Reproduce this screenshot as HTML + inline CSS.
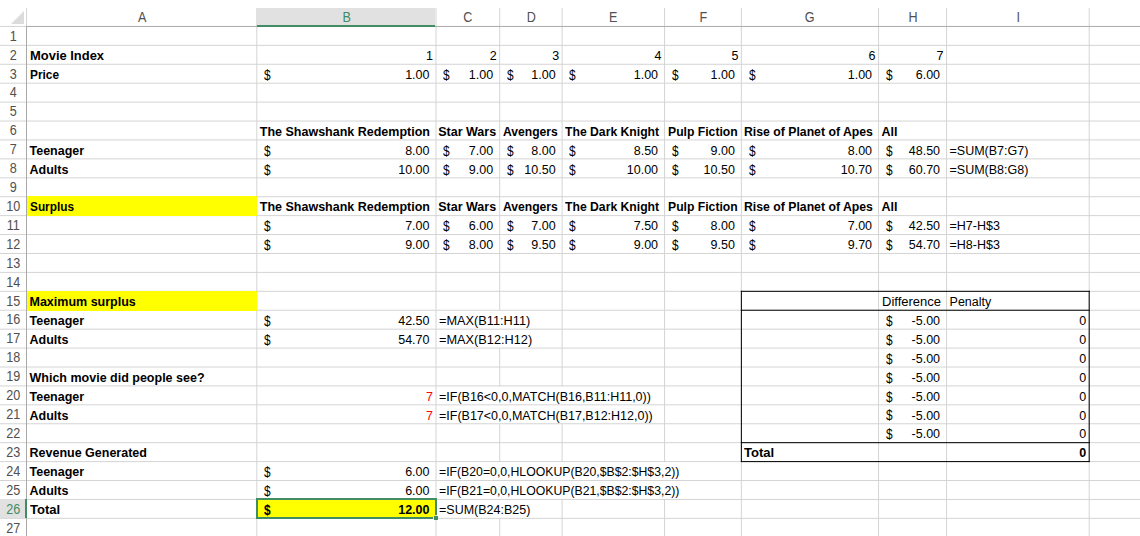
<!DOCTYPE html>
<html><head><meta charset="utf-8"><style>
html,body{margin:0;padding:0;}
body{width:1140px;height:536px;position:relative;overflow:hidden;background:#fff;font-family:"Liberation Sans",sans-serif;font-size:12.5px;color:#000;}
.t{position:absolute;white-space:nowrap;line-height:20px;height:20px;}
.f{position:absolute;}
.ch{position:absolute;top:7.15px;text-align:center;line-height:20px;height:20px;font-size:14px;transform:scaleX(0.9);}
.rh{position:absolute;left:0;width:26.50px;text-align:center;line-height:20px;height:20px;font-size:14px;transform:scaleX(0.9);}
svg{position:absolute;left:0;top:0;}
#tri{position:absolute;left:11px;top:11px;width:0;height:0;border-left:13px solid transparent;border-bottom:13px solid #dcdcdc;}
</style></head><body>
<div id="tri"></div>
<svg width="1140" height="536" viewBox="0 0 1140 536">
<line x1="0.00" y1="45.36" x2="1140.00" y2="45.36" stroke="#d4d4d4" stroke-width="1.0"/>
<line x1="0.00" y1="64.28" x2="1140.00" y2="64.28" stroke="#d4d4d4" stroke-width="1.0"/>
<line x1="0.00" y1="83.20" x2="1140.00" y2="83.20" stroke="#d4d4d4" stroke-width="1.0"/>
<line x1="0.00" y1="102.12" x2="1140.00" y2="102.12" stroke="#d4d4d4" stroke-width="1.0"/>
<line x1="0.00" y1="121.04" x2="1140.00" y2="121.04" stroke="#d4d4d4" stroke-width="1.0"/>
<line x1="0.00" y1="139.96" x2="1140.00" y2="139.96" stroke="#d4d4d4" stroke-width="1.0"/>
<line x1="0.00" y1="158.88" x2="1140.00" y2="158.88" stroke="#d4d4d4" stroke-width="1.0"/>
<line x1="0.00" y1="177.80" x2="1140.00" y2="177.80" stroke="#d4d4d4" stroke-width="1.0"/>
<line x1="0.00" y1="196.72" x2="1140.00" y2="196.72" stroke="#d4d4d4" stroke-width="1.0"/>
<line x1="0.00" y1="215.64" x2="1140.00" y2="215.64" stroke="#d4d4d4" stroke-width="1.0"/>
<line x1="0.00" y1="234.56" x2="1140.00" y2="234.56" stroke="#d4d4d4" stroke-width="1.0"/>
<line x1="0.00" y1="253.48" x2="1140.00" y2="253.48" stroke="#d4d4d4" stroke-width="1.0"/>
<line x1="0.00" y1="272.40" x2="1140.00" y2="272.40" stroke="#d4d4d4" stroke-width="1.0"/>
<line x1="0.00" y1="291.32" x2="1140.00" y2="291.32" stroke="#d4d4d4" stroke-width="1.0"/>
<line x1="0.00" y1="310.24" x2="1140.00" y2="310.24" stroke="#d4d4d4" stroke-width="1.0"/>
<line x1="0.00" y1="329.16" x2="1140.00" y2="329.16" stroke="#d4d4d4" stroke-width="1.0"/>
<line x1="0.00" y1="348.08" x2="1140.00" y2="348.08" stroke="#d4d4d4" stroke-width="1.0"/>
<line x1="0.00" y1="367.00" x2="1140.00" y2="367.00" stroke="#d4d4d4" stroke-width="1.0"/>
<line x1="0.00" y1="385.92" x2="1140.00" y2="385.92" stroke="#d4d4d4" stroke-width="1.0"/>
<line x1="0.00" y1="404.84" x2="1140.00" y2="404.84" stroke="#d4d4d4" stroke-width="1.0"/>
<line x1="0.00" y1="423.76" x2="1140.00" y2="423.76" stroke="#d4d4d4" stroke-width="1.0"/>
<line x1="0.00" y1="442.68" x2="1140.00" y2="442.68" stroke="#d4d4d4" stroke-width="1.0"/>
<line x1="0.00" y1="461.60" x2="1140.00" y2="461.60" stroke="#d4d4d4" stroke-width="1.0"/>
<line x1="0.00" y1="480.52" x2="1140.00" y2="480.52" stroke="#d4d4d4" stroke-width="1.0"/>
<line x1="0.00" y1="499.44" x2="1140.00" y2="499.44" stroke="#d4d4d4" stroke-width="1.0"/>
<line x1="0.00" y1="518.36" x2="1140.00" y2="518.36" stroke="#d4d4d4" stroke-width="1.0"/>
<line x1="0.00" y1="537.28" x2="1140.00" y2="537.28" stroke="#d4d4d4" stroke-width="1.0"/>
<line x1="256.80" y1="26.44" x2="256.80" y2="536.00" stroke="#d4d4d4" stroke-width="1.0"/>
<line x1="256.80" y1="8.00" x2="256.80" y2="26.44" stroke="#d4d4d4" stroke-width="1.0"/>
<line x1="436.00" y1="26.44" x2="436.00" y2="536.00" stroke="#d4d4d4" stroke-width="1.0"/>
<line x1="436.00" y1="8.00" x2="436.00" y2="26.44" stroke="#d4d4d4" stroke-width="1.0"/>
<line x1="499.70" y1="26.44" x2="499.70" y2="310.74" stroke="#d4d4d4" stroke-width="1.0"/>
<line x1="499.70" y1="348.58" x2="499.70" y2="386.42" stroke="#d4d4d4" stroke-width="1.0"/>
<line x1="499.70" y1="424.26" x2="499.70" y2="462.10" stroke="#d4d4d4" stroke-width="1.0"/>
<line x1="499.70" y1="518.86" x2="499.70" y2="536.00" stroke="#d4d4d4" stroke-width="1.0"/>
<line x1="499.70" y1="8.00" x2="499.70" y2="26.44" stroke="#d4d4d4" stroke-width="1.0"/>
<line x1="562.10" y1="26.44" x2="562.10" y2="386.42" stroke="#d4d4d4" stroke-width="1.0"/>
<line x1="562.10" y1="424.26" x2="562.10" y2="462.10" stroke="#d4d4d4" stroke-width="1.0"/>
<line x1="562.10" y1="499.94" x2="562.10" y2="536.00" stroke="#d4d4d4" stroke-width="1.0"/>
<line x1="562.10" y1="8.00" x2="562.10" y2="26.44" stroke="#d4d4d4" stroke-width="1.0"/>
<line x1="664.55" y1="26.44" x2="664.55" y2="462.10" stroke="#d4d4d4" stroke-width="1.0"/>
<line x1="664.55" y1="499.94" x2="664.55" y2="536.00" stroke="#d4d4d4" stroke-width="1.0"/>
<line x1="664.55" y1="8.00" x2="664.55" y2="26.44" stroke="#d4d4d4" stroke-width="1.0"/>
<line x1="741.36" y1="26.44" x2="741.36" y2="536.00" stroke="#d4d4d4" stroke-width="1.0"/>
<line x1="741.36" y1="8.00" x2="741.36" y2="26.44" stroke="#d4d4d4" stroke-width="1.0"/>
<line x1="878.55" y1="26.44" x2="878.55" y2="536.00" stroke="#d4d4d4" stroke-width="1.0"/>
<line x1="878.55" y1="8.00" x2="878.55" y2="26.44" stroke="#d4d4d4" stroke-width="1.0"/>
<line x1="946.55" y1="26.44" x2="946.55" y2="536.00" stroke="#d4d4d4" stroke-width="1.0"/>
<line x1="946.55" y1="8.00" x2="946.55" y2="26.44" stroke="#d4d4d4" stroke-width="1.0"/>
<line x1="1089.20" y1="26.44" x2="1089.20" y2="536.00" stroke="#d4d4d4" stroke-width="1.0"/>
<line x1="1089.20" y1="8.00" x2="1089.20" y2="26.44" stroke="#d4d4d4" stroke-width="1.0"/>
<line x1="0.00" y1="26.44" x2="26.00" y2="26.44" stroke="#d4d4d4" stroke-width="1"/>
<line x1="26.00" y1="26.44" x2="1140.00" y2="26.44" stroke="#a9a9a9" stroke-width="1"/>
<line x1="26.50" y1="8.00" x2="26.50" y2="25.94" stroke="#d4d4d4" stroke-width="1"/>
<line x1="26.50" y1="25.94" x2="26.50" y2="536.00" stroke="#a9a9a9" stroke-width="1"/>
<line x1="740.86" y1="291.32" x2="1089.70" y2="291.32" stroke="#000" stroke-width="1"/>
<line x1="740.86" y1="310.24" x2="1089.70" y2="310.24" stroke="#000" stroke-width="1"/>
<line x1="740.86" y1="442.68" x2="1089.70" y2="442.68" stroke="#000" stroke-width="1"/>
<line x1="740.86" y1="461.60" x2="1089.70" y2="461.60" stroke="#000" stroke-width="1"/>
<line x1="741.36" y1="290.82" x2="741.36" y2="462.10" stroke="#000" stroke-width="1"/>
<line x1="1089.20" y1="290.82" x2="1089.20" y2="462.10" stroke="#000" stroke-width="1"/>
</svg>
<div class="f" style="left:27.00px;top:196.32px;width:230.30px;height:19.62px;background:#ffff00"></div>
<div class="f" style="left:27.00px;top:290.92px;width:230.30px;height:19.62px;background:#ffff00"></div>
<div class="f" style="left:257.30px;top:499.04px;width:179.20px;height:19.62px;background:#ffff00"></div>
<div class="f" style="left:257.30px;top:8.00px;width:178.20px;height:17.44px;background:#e1e1e1"></div>
<div class="f" style="left:257.30px;top:24.94px;width:178.20px;height:2.00px;background:#428c64"></div>
<div class="f" style="left:0.00px;top:499.24px;width:25.50px;height:19.02px;background:#e1e1e1"></div>
<div class="f" style="left:25.00px;top:499.24px;width:2.00px;height:19.02px;background:#428c64"></div>
<div class="ch" style="left:26.50px;width:230.30px;color:#505050">A</div>
<div class="ch" style="left:256.80px;width:179.20px;color:#428c64">B</div>
<div class="ch" style="left:436.00px;width:63.70px;color:#505050">C</div>
<div class="ch" style="left:499.70px;width:62.40px;color:#505050">D</div>
<div class="ch" style="left:562.10px;width:102.45px;color:#505050">E</div>
<div class="ch" style="left:664.55px;width:76.81px;color:#505050">F</div>
<div class="ch" style="left:741.36px;width:137.19px;color:#505050">G</div>
<div class="ch" style="left:878.55px;width:68.00px;color:#505050">H</div>
<div class="ch" style="left:946.55px;width:142.65px;color:#505050">I</div>
<div class="rh" style="top:25.69px;color:#505050">1</div>
<div class="rh" style="top:44.61px;color:#505050">2</div>
<div class="rh" style="top:63.53px;color:#505050">3</div>
<div class="rh" style="top:82.45px;color:#505050">4</div>
<div class="rh" style="top:101.37px;color:#505050">5</div>
<div class="rh" style="top:120.29px;color:#505050">6</div>
<div class="rh" style="top:139.21px;color:#505050">7</div>
<div class="rh" style="top:158.13px;color:#505050">8</div>
<div class="rh" style="top:177.05px;color:#505050">9</div>
<div class="rh" style="top:195.97px;color:#505050">10</div>
<div class="rh" style="top:214.89px;color:#505050">11</div>
<div class="rh" style="top:233.81px;color:#505050">12</div>
<div class="rh" style="top:252.73px;color:#505050">13</div>
<div class="rh" style="top:271.65px;color:#505050">14</div>
<div class="rh" style="top:290.57px;color:#505050">15</div>
<div class="rh" style="top:309.49px;color:#505050">16</div>
<div class="rh" style="top:328.41px;color:#505050">17</div>
<div class="rh" style="top:347.33px;color:#505050">18</div>
<div class="rh" style="top:366.25px;color:#505050">19</div>
<div class="rh" style="top:385.17px;color:#505050">20</div>
<div class="rh" style="top:404.09px;color:#505050">21</div>
<div class="rh" style="top:423.01px;color:#505050">22</div>
<div class="rh" style="top:441.93px;color:#505050">23</div>
<div class="rh" style="top:460.85px;color:#505050">24</div>
<div class="rh" style="top:479.77px;color:#505050">25</div>
<div class="rh" style="top:498.69px;color:#428c64">26</div>
<div class="rh" style="top:517.61px;color:#505050">27</div>
<div class="t" style="top:46.03px;left:29.50px;font-weight:bold;transform:scaleX(1.035);transform-origin:left center;">Movie Index</div>
<div class="t" style="top:46.03px;right:707.00px;">1</div>
<div class="t" style="top:46.03px;right:643.30px;">2</div>
<div class="t" style="top:46.03px;right:580.90px;">3</div>
<div class="t" style="top:46.03px;right:478.45px;">4</div>
<div class="t" style="top:46.03px;right:401.64px;">5</div>
<div class="t" style="top:46.03px;right:264.45px;">6</div>
<div class="t" style="top:46.03px;right:196.45px;">7</div>
<div class="t" style="top:64.95px;left:29.50px;font-weight:bold;transform:scaleX(0.95);transform-origin:left center;">Price</div>
<div class="t" style="top:64.93px;left:264.10px;font-size:14px;transform:scaleX(0.85);transform-origin:left center;">$</div>
<div class="t" style="top:64.95px;right:710.50px;">1.00</div>
<div class="t" style="top:64.93px;left:443.30px;font-size:14px;transform:scaleX(0.85);transform-origin:left center;">$</div>
<div class="t" style="top:64.95px;right:646.80px;">1.00</div>
<div class="t" style="top:64.93px;left:507.00px;font-size:14px;transform:scaleX(0.85);transform-origin:left center;">$</div>
<div class="t" style="top:64.95px;right:584.40px;">1.00</div>
<div class="t" style="top:64.93px;left:569.40px;font-size:14px;transform:scaleX(0.85);transform-origin:left center;">$</div>
<div class="t" style="top:64.95px;right:481.95px;">1.00</div>
<div class="t" style="top:64.93px;left:671.85px;font-size:14px;transform:scaleX(0.85);transform-origin:left center;">$</div>
<div class="t" style="top:64.95px;right:405.14px;">1.00</div>
<div class="t" style="top:64.93px;left:748.66px;font-size:14px;transform:scaleX(0.85);transform-origin:left center;">$</div>
<div class="t" style="top:64.95px;right:267.95px;">1.00</div>
<div class="t" style="top:64.93px;left:885.85px;font-size:14px;transform:scaleX(0.85);transform-origin:left center;">$</div>
<div class="t" style="top:64.95px;right:199.95px;">6.00</div>
<div class="t" style="top:121.71px;left:259.80px;font-weight:bold;">The Shawshank Redemption</div>
<div class="t" style="top:121.71px;left:438.20px;font-weight:bold;">Star Wars</div>
<div class="t" style="top:121.71px;left:502.70px;font-weight:bold;transform:scaleX(0.97);transform-origin:left center;">Avengers</div>
<div class="t" style="top:121.71px;left:565.10px;font-weight:bold;transform:scaleX(0.975);transform-origin:left center;">The Dark Knight</div>
<div class="t" style="top:121.71px;left:667.55px;font-weight:bold;transform:scaleX(0.975);transform-origin:left center;">Pulp Fiction</div>
<div class="t" style="top:121.71px;left:744.36px;font-weight:bold;transform:scaleX(0.98);transform-origin:left center;">Rise of Planet of Apes</div>
<div class="t" style="top:121.71px;left:881.55px;font-weight:bold;">All</div>
<div class="t" style="top:197.39px;left:259.80px;font-weight:bold;">The Shawshank Redemption</div>
<div class="t" style="top:197.39px;left:438.20px;font-weight:bold;">Star Wars</div>
<div class="t" style="top:197.39px;left:502.70px;font-weight:bold;transform:scaleX(0.97);transform-origin:left center;">Avengers</div>
<div class="t" style="top:197.39px;left:565.10px;font-weight:bold;transform:scaleX(0.975);transform-origin:left center;">The Dark Knight</div>
<div class="t" style="top:197.39px;left:667.55px;font-weight:bold;transform:scaleX(0.975);transform-origin:left center;">Pulp Fiction</div>
<div class="t" style="top:197.39px;left:744.36px;font-weight:bold;transform:scaleX(0.98);transform-origin:left center;">Rise of Planet of Apes</div>
<div class="t" style="top:197.39px;left:881.55px;font-weight:bold;">All</div>
<div class="t" style="top:140.63px;left:29.50px;font-weight:bold;">Teenager</div>
<div class="t" style="top:159.55px;left:29.50px;font-weight:bold;">Adults</div>
<div class="t" style="top:140.61px;left:264.10px;font-size:14px;transform:scaleX(0.85);transform-origin:left center;">$</div>
<div class="t" style="top:140.63px;right:710.50px;">8.00</div>
<div class="t" style="top:140.61px;left:443.30px;font-size:14px;transform:scaleX(0.85);transform-origin:left center;">$</div>
<div class="t" style="top:140.63px;right:646.80px;">7.00</div>
<div class="t" style="top:140.61px;left:507.00px;font-size:14px;transform:scaleX(0.85);transform-origin:left center;">$</div>
<div class="t" style="top:140.63px;right:584.40px;">8.00</div>
<div class="t" style="top:140.61px;left:569.40px;font-size:14px;transform:scaleX(0.85);transform-origin:left center;">$</div>
<div class="t" style="top:140.63px;right:481.95px;">8.50</div>
<div class="t" style="top:140.61px;left:671.85px;font-size:14px;transform:scaleX(0.85);transform-origin:left center;">$</div>
<div class="t" style="top:140.63px;right:405.14px;">9.00</div>
<div class="t" style="top:140.61px;left:748.66px;font-size:14px;transform:scaleX(0.85);transform-origin:left center;">$</div>
<div class="t" style="top:140.63px;right:267.95px;">8.00</div>
<div class="t" style="top:140.61px;left:885.85px;font-size:14px;transform:scaleX(0.85);transform-origin:left center;">$</div>
<div class="t" style="top:140.63px;right:199.95px;">48.50</div>
<div class="t" style="top:159.53px;left:264.10px;font-size:14px;transform:scaleX(0.85);transform-origin:left center;">$</div>
<div class="t" style="top:159.55px;right:710.50px;">10.00</div>
<div class="t" style="top:159.53px;left:443.30px;font-size:14px;transform:scaleX(0.85);transform-origin:left center;">$</div>
<div class="t" style="top:159.55px;right:646.80px;">9.00</div>
<div class="t" style="top:159.53px;left:507.00px;font-size:14px;transform:scaleX(0.85);transform-origin:left center;">$</div>
<div class="t" style="top:159.55px;right:584.40px;">10.50</div>
<div class="t" style="top:159.53px;left:569.40px;font-size:14px;transform:scaleX(0.85);transform-origin:left center;">$</div>
<div class="t" style="top:159.55px;right:481.95px;">10.00</div>
<div class="t" style="top:159.53px;left:671.85px;font-size:14px;transform:scaleX(0.85);transform-origin:left center;">$</div>
<div class="t" style="top:159.55px;right:405.14px;">10.50</div>
<div class="t" style="top:159.53px;left:748.66px;font-size:14px;transform:scaleX(0.85);transform-origin:left center;">$</div>
<div class="t" style="top:159.55px;right:267.95px;">10.70</div>
<div class="t" style="top:159.53px;left:885.85px;font-size:14px;transform:scaleX(0.85);transform-origin:left center;">$</div>
<div class="t" style="top:159.55px;right:199.95px;">60.70</div>
<div class="t" style="top:140.63px;left:949.55px;">=SUM(B7:G7)</div>
<div class="t" style="top:159.55px;left:949.55px;">=SUM(B8:G8)</div>
<div class="t" style="top:197.39px;left:29.50px;font-weight:bold;transform:scaleX(0.945);transform-origin:left center;">Surplus</div>
<div class="t" style="top:216.29px;left:264.10px;font-size:14px;transform:scaleX(0.85);transform-origin:left center;">$</div>
<div class="t" style="top:216.31px;right:710.50px;">7.00</div>
<div class="t" style="top:216.29px;left:443.30px;font-size:14px;transform:scaleX(0.85);transform-origin:left center;">$</div>
<div class="t" style="top:216.31px;right:646.80px;">6.00</div>
<div class="t" style="top:216.29px;left:507.00px;font-size:14px;transform:scaleX(0.85);transform-origin:left center;">$</div>
<div class="t" style="top:216.31px;right:584.40px;">7.00</div>
<div class="t" style="top:216.29px;left:569.40px;font-size:14px;transform:scaleX(0.85);transform-origin:left center;">$</div>
<div class="t" style="top:216.31px;right:481.95px;">7.50</div>
<div class="t" style="top:216.29px;left:671.85px;font-size:14px;transform:scaleX(0.85);transform-origin:left center;">$</div>
<div class="t" style="top:216.31px;right:405.14px;">8.00</div>
<div class="t" style="top:216.29px;left:748.66px;font-size:14px;transform:scaleX(0.85);transform-origin:left center;">$</div>
<div class="t" style="top:216.31px;right:267.95px;">7.00</div>
<div class="t" style="top:216.29px;left:885.85px;font-size:14px;transform:scaleX(0.85);transform-origin:left center;">$</div>
<div class="t" style="top:216.31px;right:199.95px;">42.50</div>
<div class="t" style="top:235.21px;left:264.10px;font-size:14px;transform:scaleX(0.85);transform-origin:left center;">$</div>
<div class="t" style="top:235.23px;right:710.50px;">9.00</div>
<div class="t" style="top:235.21px;left:443.30px;font-size:14px;transform:scaleX(0.85);transform-origin:left center;">$</div>
<div class="t" style="top:235.23px;right:646.80px;">8.00</div>
<div class="t" style="top:235.21px;left:507.00px;font-size:14px;transform:scaleX(0.85);transform-origin:left center;">$</div>
<div class="t" style="top:235.23px;right:584.40px;">9.50</div>
<div class="t" style="top:235.21px;left:569.40px;font-size:14px;transform:scaleX(0.85);transform-origin:left center;">$</div>
<div class="t" style="top:235.23px;right:481.95px;">9.00</div>
<div class="t" style="top:235.21px;left:671.85px;font-size:14px;transform:scaleX(0.85);transform-origin:left center;">$</div>
<div class="t" style="top:235.23px;right:405.14px;">9.50</div>
<div class="t" style="top:235.21px;left:748.66px;font-size:14px;transform:scaleX(0.85);transform-origin:left center;">$</div>
<div class="t" style="top:235.23px;right:267.95px;">9.70</div>
<div class="t" style="top:235.21px;left:885.85px;font-size:14px;transform:scaleX(0.85);transform-origin:left center;">$</div>
<div class="t" style="top:235.23px;right:199.95px;">54.70</div>
<div class="t" style="top:216.31px;left:949.55px;">=H7-H$3</div>
<div class="t" style="top:235.23px;left:949.55px;">=H8-H$3</div>
<div class="t" style="top:291.99px;left:29.50px;font-weight:bold;">Maximum surplus</div>
<div class="t" style="top:291.99px;left:881.55px;transform:scaleX(1.04);transform-origin:left center;">Difference</div>
<div class="t" style="top:291.99px;left:949.55px;">Penalty</div>
<div class="t" style="top:310.91px;left:29.50px;font-weight:bold;">Teenager</div>
<div class="t" style="top:310.89px;left:264.10px;font-size:14px;transform:scaleX(0.85);transform-origin:left center;">$</div>
<div class="t" style="top:310.91px;right:710.50px;">42.50</div>
<div class="t" style="top:310.91px;left:439.00px;transform:scaleX(1.02);transform-origin:left center;">=MAX(B11:H11)</div>
<div class="t" style="top:329.83px;left:29.50px;font-weight:bold;">Adults</div>
<div class="t" style="top:329.81px;left:264.10px;font-size:14px;transform:scaleX(0.85);transform-origin:left center;">$</div>
<div class="t" style="top:329.83px;right:710.50px;">54.70</div>
<div class="t" style="top:329.83px;left:439.00px;transform:scaleX(1.02);transform-origin:left center;">=MAX(B12:H12)</div>
<div class="t" style="top:310.89px;left:885.85px;font-size:14px;transform:scaleX(0.85);transform-origin:left center;">$</div>
<div class="t" style="top:310.91px;right:199.95px;">-5.00</div>
<div class="t" style="top:310.91px;right:53.80px;">0</div>
<div class="t" style="top:329.81px;left:885.85px;font-size:14px;transform:scaleX(0.85);transform-origin:left center;">$</div>
<div class="t" style="top:329.83px;right:199.95px;">-5.00</div>
<div class="t" style="top:329.83px;right:53.80px;">0</div>
<div class="t" style="top:348.73px;left:885.85px;font-size:14px;transform:scaleX(0.85);transform-origin:left center;">$</div>
<div class="t" style="top:348.75px;right:199.95px;">-5.00</div>
<div class="t" style="top:348.75px;right:53.80px;">0</div>
<div class="t" style="top:367.65px;left:885.85px;font-size:14px;transform:scaleX(0.85);transform-origin:left center;">$</div>
<div class="t" style="top:367.67px;right:199.95px;">-5.00</div>
<div class="t" style="top:367.67px;right:53.80px;">0</div>
<div class="t" style="top:386.57px;left:885.85px;font-size:14px;transform:scaleX(0.85);transform-origin:left center;">$</div>
<div class="t" style="top:386.59px;right:199.95px;">-5.00</div>
<div class="t" style="top:386.59px;right:53.80px;">0</div>
<div class="t" style="top:405.49px;left:885.85px;font-size:14px;transform:scaleX(0.85);transform-origin:left center;">$</div>
<div class="t" style="top:405.51px;right:199.95px;">-5.00</div>
<div class="t" style="top:405.51px;right:53.80px;">0</div>
<div class="t" style="top:424.41px;left:885.85px;font-size:14px;transform:scaleX(0.85);transform-origin:left center;">$</div>
<div class="t" style="top:424.43px;right:199.95px;">-5.00</div>
<div class="t" style="top:424.43px;right:53.80px;">0</div>
<div class="t" style="top:367.67px;left:29.50px;font-weight:bold;">Which movie did people see?</div>
<div class="t" style="top:386.59px;left:29.50px;font-weight:bold;">Teenager</div>
<div class="t" style="top:386.59px;right:707.00px;color:#ff0000;">7</div>
<div class="t" style="top:386.59px;left:439.00px;">=IF(B16&lt;0,0,MATCH(B16,B11:H11,0))</div>
<div class="t" style="top:405.51px;left:29.50px;font-weight:bold;">Adults</div>
<div class="t" style="top:405.51px;right:707.00px;color:#ff0000;">7</div>
<div class="t" style="top:405.51px;left:439.00px;">=IF(B17&lt;0,0,MATCH(B17,B12:H12,0))</div>
<div class="t" style="top:443.35px;left:29.50px;font-weight:bold;">Revenue Generated</div>
<div class="t" style="top:443.35px;left:744.36px;font-weight:bold;transform:scaleX(1.045);transform-origin:left center;">Total</div>
<div class="t" style="top:443.35px;right:53.80px;font-weight:bold;">0</div>
<div class="t" style="top:462.27px;left:29.50px;font-weight:bold;">Teenager</div>
<div class="t" style="top:462.25px;left:264.10px;font-size:14px;transform:scaleX(0.85);transform-origin:left center;">$</div>
<div class="t" style="top:462.27px;right:710.50px;">6.00</div>
<div class="t" style="top:462.27px;left:439.00px;transform:scaleX(0.98);transform-origin:left center;">=IF(B20=0,0,HLOOKUP(B20,$B$2:$H$3,2))</div>
<div class="t" style="top:481.19px;left:29.50px;font-weight:bold;">Adults</div>
<div class="t" style="top:481.17px;left:264.10px;font-size:14px;transform:scaleX(0.85);transform-origin:left center;">$</div>
<div class="t" style="top:481.19px;right:710.50px;">6.00</div>
<div class="t" style="top:481.19px;left:439.00px;transform:scaleX(0.98);transform-origin:left center;">=IF(B21=0,0,HLOOKUP(B21,$B$2:$H$3,2))</div>
<div class="t" style="top:500.11px;left:29.50px;font-weight:bold;transform:scaleX(1.045);transform-origin:left center;">Total</div>
<div class="t" style="top:500.09px;left:264.10px;font-weight:bold;font-size:14px;transform:scaleX(0.85);transform-origin:left center;">$</div>
<div class="t" style="top:500.11px;right:710.50px;font-weight:bold;">12.00</div>
<div class="t" style="top:500.11px;left:439.00px;">=SUM(B24:B25)</div>
<div class="f" style="left:256.30px;top:498.44px;width:180.20px;height:2.00px;background:#428c64"></div>
<div class="f" style="left:256.30px;top:517.36px;width:176.70px;height:2.00px;background:#428c64"></div>
<div class="f" style="left:256.30px;top:498.44px;width:2.00px;height:20.92px;background:#428c64"></div>
<div class="f" style="left:434.50px;top:498.44px;width:2.00px;height:16.92px;background:#428c64"></div>
<div class="f" style="left:434.00px;top:516.00px;width:4.00px;height:4.00px;background:#428c64"></div>
</body></html>
